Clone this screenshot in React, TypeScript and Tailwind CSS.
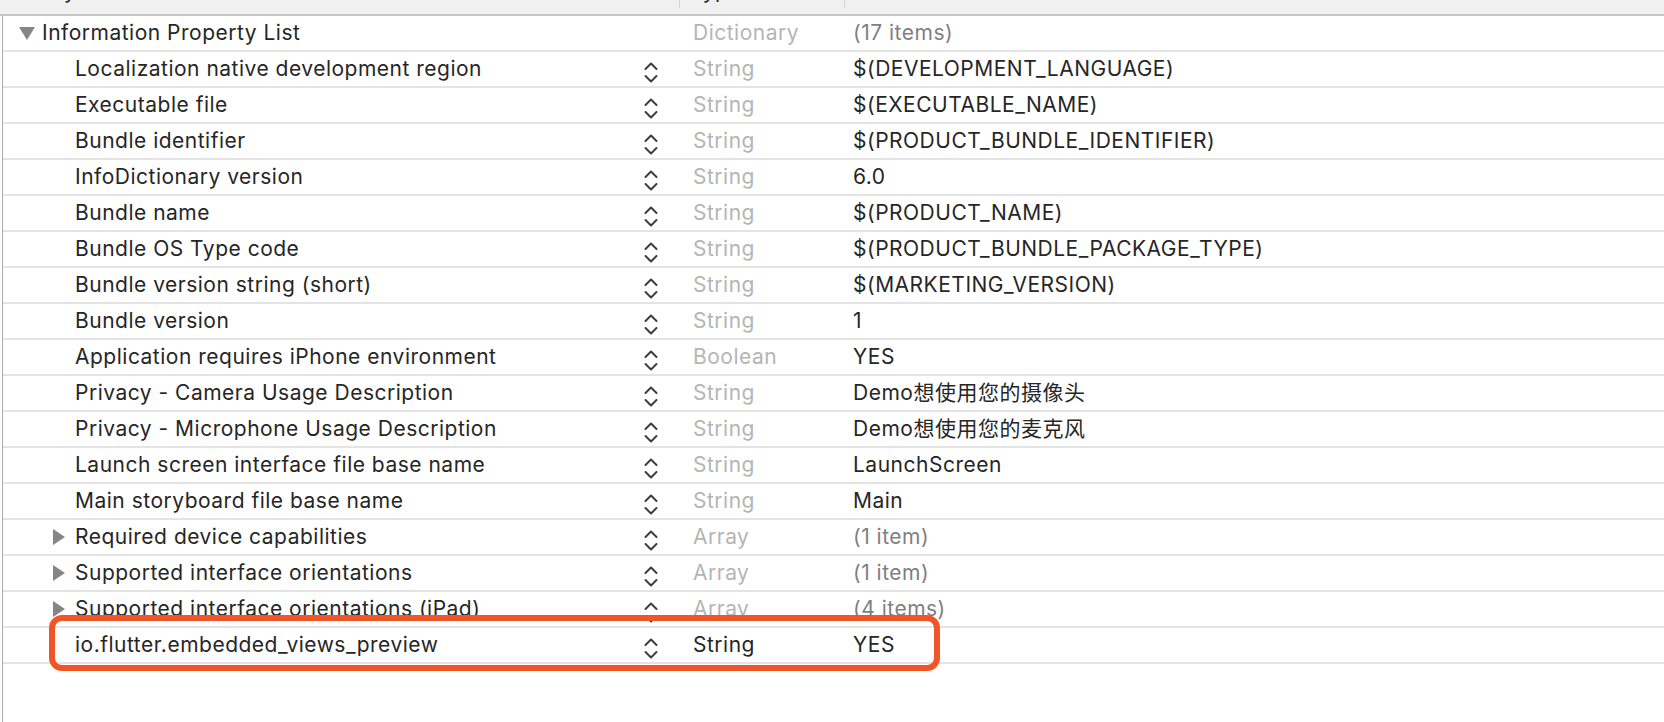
import React from "react";

type Row = {
  key: string;
  type: string;
  value: string;
  expander?: "right";
  valueGray?: boolean;
  typeDark?: boolean;
};

const rows: Row[] = [
  { key: "Localization native development region", type: "String", value: "$(DEVELOPMENT_LANGUAGE)" },
  { key: "Executable file", type: "String", value: "$(EXECUTABLE_NAME)" },
  { key: "Bundle identifier", type: "String", value: "$(PRODUCT_BUNDLE_IDENTIFIER)" },
  { key: "InfoDictionary version", type: "String", value: "6.0" },
  { key: "Bundle name", type: "String", value: "$(PRODUCT_NAME)" },
  { key: "Bundle OS Type code", type: "String", value: "$(PRODUCT_BUNDLE_PACKAGE_TYPE)" },
  { key: "Bundle version string (short)", type: "String", value: "$(MARKETING_VERSION)" },
  { key: "Bundle version", type: "String", value: "1" },
  { key: "Application requires iPhone environment", type: "Boolean", value: "YES" },
  { key: "Privacy - Camera Usage Description", type: "String", value: "Demo想使用您的摄像头" },
  { key: "Privacy - Microphone Usage Description", type: "String", value: "Demo想使用您的麦克风" },
  { key: "Launch screen interface file base name", type: "String", value: "LaunchScreen" },
  { key: "Main storyboard file base name", type: "String", value: "Main" },
  { key: "Required device capabilities", type: "Array", value: "(1 item)", expander: "right", valueGray: true },
  { key: "Supported interface orientations", type: "Array", value: "(1 item)", expander: "right", valueGray: true },
  { key: "Supported interface orientations (iPad)", type: "Array", value: "(4 items)", expander: "right", valueGray: true },
  { key: "io.flutter.embedded_views_preview", type: "String", value: "YES", typeDark: true },
];

const font = {
  fontFamily: "Inter, 'Noto Sans CJK SC', sans-serif",
};

function Stepper() {
  return (
    <svg width="14" height="21" viewBox="0 0 14 21" className="mt-[7px] shrink-0">
      <polyline points="1.5,7 7,1.5 12.5,7" fill="none" stroke="#3d3d3d" strokeWidth="2" strokeLinecap="round" strokeLinejoin="round" />
      <polyline points="1.5,14 7,19.5 12.5,14" fill="none" stroke="#3d3d3d" strokeWidth="2" strokeLinecap="round" strokeLinejoin="round" />
    </svg>
  );
}

function Separator() {
  return <div className="h-[2px] bg-[#e4e4e4]" />;
}

export default function App() {
  return (
    <div
      className="relative w-[1664px] h-[722px] bg-white overflow-hidden text-[21px] tracking-[0.5px] text-[#262626]"
      style={font}
    >
      <div className="flex h-full">
        <div className="w-[2px] shrink-0" />
        <div className="w-[1px] shrink-0 bg-[#ababab]" />
        <div className="flex-1 flex flex-col">
          {/* header */}
          <div className="h-[14px] bg-[#f0f0f0] flex items-end overflow-hidden -ml-[3px]">
            <div className="w-[679px] shrink-0 flex items-end pl-[38px] h-full">
              <span className="leading-[20px] mb-[13px] text-[#262626]">Key</span>
            </div>
            <div className="w-[1px] h-[8px] self-start bg-[#d4d4d4]" />
            <div className="w-[164px] shrink-0 flex items-end pl-[10px] h-full">
              <span className="leading-[20px] mb-[13px]">Type</span>
            </div>
            <div className="w-[1px] h-[8px] self-start bg-[#d4d4d4]" />
            <div className="flex-1 flex items-end pl-[8px] h-full">
              <span className="leading-[20px] mb-[13px]">Value</span>
            </div>
          </div>
          <div className="h-[2px] bg-[#c6c6c6] -ml-[3px]" />

          {/* root row */}
          <div className="h-[34px] flex items-center -ml-[3px]">
            <div className="w-[679px] shrink-0 flex items-center">
              <svg width="16" height="13" viewBox="0 0 16 13" className="ml-[19px] mr-[7px] mt-[1px]">
                <polygon points="0,0 16,0 8,13" fill="#858585" />
              </svg>
              <span>Information Property List</span>
            </div>
            <div className="w-[174px] shrink-0 pl-[14px] text-[#b5b5b5]">Dictionary</div>
            <div className="flex-1 text-[#7f7f7f]">(17 items)</div>
          </div>
          <Separator />

          {rows.map((r) => (
            <React.Fragment key={r.key}>
              <div className="h-[34px] flex items-center -ml-[3px]">
                <div className="w-[679px] shrink-0 flex items-center h-full">
                  <div className="flex-1 flex items-center">
                    {r.expander ? (
                      <svg width="12" height="16" viewBox="0 0 12 16" className="ml-[53px] mr-[10px]">
                        <polygon points="0,0 12,8 0,16" fill="#858585" />
                      </svg>
                    ) : (
                      <div className="w-[75px] shrink-0" />
                    )}
                    <span className="whitespace-nowrap">{r.key}</span>
                  </div>
                  <div className="mr-[21px] h-full flex items-start pt-[3px]">
                    <Stepper />
                  </div>
                </div>
                <div className={"w-[174px] shrink-0 pl-[14px] " + (r.typeDark ? "text-[#262626]" : "text-[#b5b5b5]")}>
                  {r.type}
                </div>
                <div className={"flex-1 whitespace-nowrap " + (r.valueGray ? "text-[#7f7f7f]" : "text-[#262626]")}>
                  {r.value}
                </div>
              </div>
              <Separator />
            </React.Fragment>
          ))}
        </div>
      </div>

      {/* annotation highlight */}
      <div className="absolute left-[49px] top-[615px] w-[891px] h-[56px] border-[6px] border-[#ef5526] rounded-[13px]" />
    </div>
  );
}
